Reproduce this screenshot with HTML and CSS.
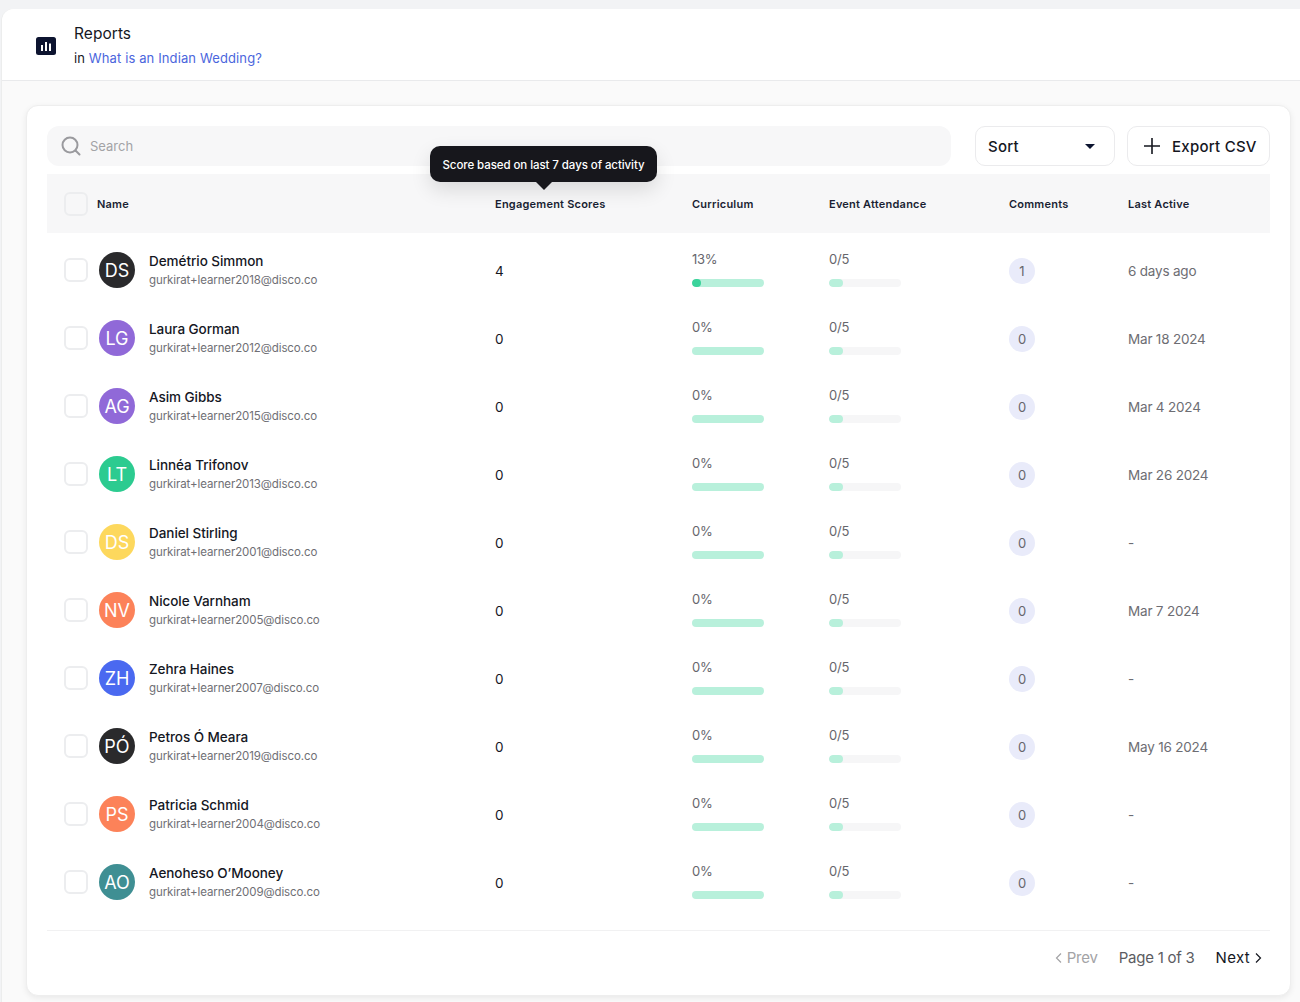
FILE: index.html
```html
<!DOCTYPE html>
<html lang="en">
<head>
<meta charset="utf-8">
<title>Reports</title>
<link rel="stylesheet" href="styles.css">
</head>
<body>
<div class="shell">
  <header class="head">
    <span class="head-icon"><svg width="20" height="18" viewBox="0 0 20 18"><rect width="20" height="18" rx="2.5" fill="#0d1430"/><rect x="5" y="8" width="2" height="6" fill="#fff"/><rect x="9" y="5" width="2" height="9" fill="#fff"/><rect x="13" y="6.500" width="2" height="7.500" fill="#fff"/></svg></span>
    <div>
      <div class="head-title">Reports</div>
      <div class="head-sub">in <a class="link">What is an Indian Wedding?</a></div>
    </div>
  </header>
  <main class="content">
    <section class="card">
      <div class="toolbar">
        <div class="search">
          <svg width="20" height="20" viewBox="0 0 20 20" fill="none" stroke="#9a9a9e" stroke-width="2" stroke-linecap="round"><circle cx="9" cy="9" r="7.500"/><path d="M14.500 14.500L18.500 18.500"/></svg>
          <span>Search</span>
        </div>
        <div class="btn sort"><span>Sort</span><span class="caret"></span></div>
        <div class="btn export">
          <svg width="16" height="16" viewBox="0 0 16 16" fill="none" stroke="#15171f" stroke-width="1.600"><path d="M8 0V16M0 8H16"/></svg>
          <span>Export CSV</span>
        </div>
      </div>
      <div class="row headrow">
        <div class="namecell"><span class="check"></span><span>Name</span></div>
        <div>Engagement Scores</div>
        <div>Curriculum</div>
        <div>Event Attendance</div>
        <div>Comments</div>
        <div>Last Active</div>
      </div>
      <div class="tip">Score based on last 7 days of activity</div>

      <div class="row"><div class="namecell"><span class="check"></span><span class="avatar dark">DS</span><div><div class="name">Demétrio Simmon</div><div class="email">gurkirat+learner2018@disco.co</div></div></div><div class="score">4</div><div class="metric"><span>13%</span><div class="bar"><i class="dot"></i></div></div><div class="metric"><span>0/5</span><div class="bar ev"><i></i></div></div><div class="shifted"><span class="badge">1</span></div><div class="muted">6 days ago</div></div>
      <div class="row"><div class="namecell"><span class="check"></span><span class="avatar purple">LG</span><div><div class="name">Laura Gorman</div><div class="email">gurkirat+learner2012@disco.co</div></div></div><div class="score">0</div><div class="metric"><span>0%</span><div class="bar"></div></div><div class="metric"><span>0/5</span><div class="bar ev"><i></i></div></div><div class="shifted"><span class="badge">0</span></div><div class="muted">Mar 18 2024</div></div>
      <div class="row"><div class="namecell"><span class="check"></span><span class="avatar purple">AG</span><div><div class="name">Asim Gibbs</div><div class="email">gurkirat+learner2015@disco.co</div></div></div><div class="score">0</div><div class="metric"><span>0%</span><div class="bar"></div></div><div class="metric"><span>0/5</span><div class="bar ev"><i></i></div></div><div class="shifted"><span class="badge">0</span></div><div class="muted">Mar 4 2024</div></div>
      <div class="row"><div class="namecell"><span class="check"></span><span class="avatar green">LT</span><div><div class="name">Linnéa Trifonov</div><div class="email">gurkirat+learner2013@disco.co</div></div></div><div class="score">0</div><div class="metric"><span>0%</span><div class="bar"></div></div><div class="metric"><span>0/5</span><div class="bar ev"><i></i></div></div><div class="shifted"><span class="badge">0</span></div><div class="muted">Mar 26 2024</div></div>
      <div class="row"><div class="namecell"><span class="check"></span><span class="avatar yellow">DS</span><div><div class="name">Daniel Stirling</div><div class="email">gurkirat+learner2001@disco.co</div></div></div><div class="score">0</div><div class="metric"><span>0%</span><div class="bar"></div></div><div class="metric"><span>0/5</span><div class="bar ev"><i></i></div></div><div class="shifted"><span class="badge">0</span></div><div class="muted">-</div></div>
      <div class="row"><div class="namecell"><span class="check"></span><span class="avatar orange">NV</span><div><div class="name">Nicole Varnham</div><div class="email">gurkirat+learner2005@disco.co</div></div></div><div class="score">0</div><div class="metric"><span>0%</span><div class="bar"></div></div><div class="metric"><span>0/5</span><div class="bar ev"><i></i></div></div><div class="shifted"><span class="badge">0</span></div><div class="muted">Mar 7 2024</div></div>
      <div class="row"><div class="namecell"><span class="check"></span><span class="avatar blue">ZH</span><div><div class="name">Zehra Haines</div><div class="email">gurkirat+learner2007@disco.co</div></div></div><div class="score">0</div><div class="metric"><span>0%</span><div class="bar"></div></div><div class="metric"><span>0/5</span><div class="bar ev"><i></i></div></div><div class="shifted"><span class="badge">0</span></div><div class="muted">-</div></div>
      <div class="row"><div class="namecell"><span class="check"></span><span class="avatar dark">PÓ</span><div><div class="name">Petros Ó Meara</div><div class="email">gurkirat+learner2019@disco.co</div></div></div><div class="score">0</div><div class="metric"><span>0%</span><div class="bar"></div></div><div class="metric"><span>0/5</span><div class="bar ev"><i></i></div></div><div class="shifted"><span class="badge">0</span></div><div class="muted">May 16 2024</div></div>
      <div class="row"><div class="namecell"><span class="check"></span><span class="avatar orange">PS</span><div><div class="name">Patricia Schmid</div><div class="email">gurkirat+learner2004@disco.co</div></div></div><div class="score">0</div><div class="metric"><span>0%</span><div class="bar"></div></div><div class="metric"><span>0/5</span><div class="bar ev"><i></i></div></div><div class="shifted"><span class="badge">0</span></div><div class="muted">-</div></div>
      <div class="row"><div class="namecell"><span class="check"></span><span class="avatar teal">AO</span><div><div class="name">Aenoheso O’Mooney</div><div class="email">gurkirat+learner2009@disco.co</div></div></div><div class="score">0</div><div class="metric"><span>0%</span><div class="bar"></div></div><div class="metric"><span>0/5</span><div class="bar ev"><i></i></div></div><div class="shifted"><span class="badge">0</span></div><div class="muted">-</div></div>

      <footer class="pager">
        <span class="prev"><svg width="7" height="10" viewBox="0 0 7 10" fill="none" stroke="currentColor" stroke-width="1.200"><path d="M6 .500L1.500 5L6 9.500"/></svg>Prev</span>
        <span class="page">Page 1 of 3</span>
        <span class="next">Next<svg width="7" height="10" viewBox="0 0 7 10" fill="none" stroke="currentColor" stroke-width="1.200"><path d="M1 .500L5.500 5L1 9.500"/></svg></span>
      </footer>
    </section>
  </main>
</div>
</body>
</html>
```
FILE: styles.css
```css
* { box-sizing: border-box; }
html, body { margin: 0; height: 1002px; overflow: hidden; }
body { background: #f2f3f5; font-family: Inter, "Noto Sans", sans-serif; color: #15171f; }
.shell { margin: 9px 0 0 1px; height: 993px; background: #fafafa; border-top-left-radius: 12px; border-left: 1px solid #eceded; display: flex; flex-direction: column; }
.head { height: 72px; flex: none; background: #fff; border-bottom: 1px solid #e9eaec; border-top-left-radius: 12px; display: flex; align-items: center; gap: 18px; padding: 2px 0 0 34px; }
.head-icon { display: flex; }
.head-title { font-size: 15.500px; line-height: 20px; letter-spacing: .05px; margin-bottom: 5px; }
.head-sub { font-size: 13px; line-height: 18px; letter-spacing: .12px; }
.link { color: #4b66dd; }
.content { flex: 1; padding: 24px 9px 6px 24px; }
.card { position: relative; height: 891px; background: #fff; border: 1px solid #eeeeee; border-radius: 12px; box-shadow: 0 2px 6px rgba(0,0,0,.07); padding: 20px 20px 0; }
.toolbar { display: flex; height: 40px; gap: 12px; margin-bottom: 8px; }
.search { flex: 1; margin-right: 12px; background: #f7f7f8; border-radius: 12px; display: flex; align-items: center; gap: 9px; padding-left: 14px; color: #a3a3a6; font-size: 13px; }
.btn { border: 1px solid #ebebed; border-radius: 10px; display: flex; align-items: center; font-size: 15px; font-weight: 500; letter-spacing: .25px; }
.sort { width: 140px; justify-content: space-between; padding: 0 19px 0 12px; }
.caret { width: 0; height: 0; border-left: 5px solid transparent; border-right: 5px solid transparent; border-top: 5px solid #0d1430; }
.export { width: 143px; gap: 12px; padding-left: 16px; }
.row { display: grid; grid-template-columns: 448px 197px 137px 180px 119px 142px; height: 68px; align-items: center; width: 1223px; }
.headrow { height: 59px; margin-bottom: 3px; background: #f7f7f8; font-size: 11px; font-weight: 600; letter-spacing: .22px; color: #1a1f33; }
.namecell { display: flex; align-items: center; padding-left: 17px; }
.check { width: 24px; height: 24px; flex: none; border: 2px solid #ecedef; border-radius: 6px; background: #fff; margin-right: 11px; }
.headrow .check { background: #f7f7f8; margin-right: 9px; }
.avatar { width: 36px; height: 36px; flex: none; border-radius: 50%; color: #fff; font-size: 18px; display: flex; align-items: center; justify-content: center; margin-right: 14px; }
.dark { background: #2a2a2c; }
.purple { background: #9069d8; }
.green { background: #2ccb90; }
.yellow { background: #fdd85d; }
.orange { background: #fc8259; }
.blue { background: #4a69f0; }
.teal { background: #3f8f93; }
.name { font-size: 13.500px; line-height: 18px; font-weight: 500; letter-spacing: -.05px; margin-bottom: 2px; }
.email { font-size: 11.500px; line-height: 16px; color: #6f6f75; letter-spacing: -.1px; }
.score { font-size: 13.500px; padding-top: 2px; }
.metric { display: flex; flex-direction: column; gap: 12px; font-size: 13px; line-height: 16px; color: #66666c; letter-spacing: -.25px; padding-bottom: 3px; }
.bar { width: 72px; height: 8px; border-radius: 4px; background: #b8f0db; overflow: hidden; }
.ev { background: #f6f6f7; }
.bar i { display: block; height: 100%; border-radius: 4px; }
.ev i { width: 14px; background: #b8f0db; }
.dot { width: 9px; background: #3bd39b; }
.shifted { padding-top: 2px; }
.badge { width: 26px; height: 26px; border-radius: 50%; background: #e9ebfa; color: #66666c; font-size: 13px; display: flex; align-items: center; justify-content: center; }
.muted { color: #6d6d73; font-size: 13.500px; letter-spacing: -.2px; padding-top: 2px; }
.tip { position: absolute; left: 403px; top: 40px; width: 227px; height: 36px; padding-top: 2px; background: #17171c; color: #fff; border-radius: 10px; font-size: 11.500px; font-weight: 500; letter-spacing: -.08px; display: flex; align-items: center; justify-content: center; box-shadow: 0 8px 20px rgba(0,0,0,.12); }
.tip::after { content: ""; position: absolute; left: 106px; top: 36px; border-left: 8px solid transparent; border-right: 8px solid transparent; border-top: 8px solid #17171c; }
.pager { margin-top: 14px; border-top: 1px solid #f1f1f2; height: 54px; width: 1223px; display: flex; align-items: center; justify-content: flex-end; font-size: 15px; letter-spacing: -.2px; padding-right: 8px; }
.prev { color: #a3a3a6; display: flex; align-items: center; gap: 5px; }
.page { color: #5c5c62; margin: 0 21px; letter-spacing: -.25px; }
.next { display: flex; align-items: center; gap: 5px; letter-spacing: .35px; }
```
